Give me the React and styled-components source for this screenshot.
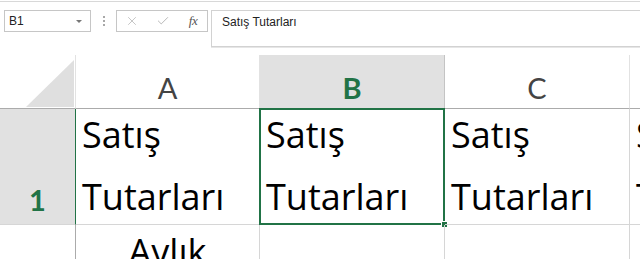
import React from "react"
import styled, { createGlobalStyle } from "styled-components"
import { X, Check } from "lucide-react"

const GREEN = "#217346"
const GRID = "#d6d6d6"

const GlobalStyle = createGlobalStyle`
  html, body { margin: 0; padding: 0; background: #fff; }
  body { overflow: hidden; }
`

// whole window, clipped to the screenshot size
const Window = styled.div`
  width: 640px;
  height: 259px;
  overflow: hidden;
  background: #fff;
  padding-top: 1px;
  box-sizing: border-box;
`

const TopRule = styled.div`
  height: 1px;
  background: #d8d8d8;
`

const FormulaBar = styled.div`
  display: flex;
  align-items: flex-start;
  margin-top: 8px;
  height: 37px;
  font-family: "Liberation Sans", Arial, sans-serif;
  font-size: 12px;
  color: #222;
`

const NameBox = styled.div`
  display: flex;
  align-items: center;
  justify-content: space-between;
  box-sizing: border-box;
  width: 87px;
  height: 22px;
  margin-left: 4px;
  padding: 0 8px 0 4px;
  border: 1px solid #c6c6c6;
`

const Caret = styled.span`
  width: 0;
  height: 0;
  border-left: 3px solid transparent;
  border-right: 3px solid transparent;
  border-top: 3px solid #777;
`

const Grip = styled.div`
  display: flex;
  flex-direction: column;
  align-items: center;
  gap: 2px;
  width: 25px;
  padding-top: 6px;

  span {
    width: 2px;
    height: 2px;
    background: #a8a8a8;
  }
`

const FxBox = styled.div`
  display: grid;
  grid-template-columns: 30px 32px 28px;
  align-items: center;
  justify-items: center;
  box-sizing: border-box;
  width: 92px;
  height: 22px;
  border: 1px solid #c6c6c6;
  color: #b4b4b4;
`

const Fx = styled.span`
  font-family: "Liberation Serif", "Times New Roman", serif;
  font-style: italic;
  font-size: 13px;
  color: #555;
  letter-spacing: -0.5px;
`

const FormulaInput = styled.div`
  flex: 1;
  box-sizing: border-box;
  height: 37px;
  margin-left: 3px;
  padding: 4px 10px;
  line-height: 14px;
  border: 1px solid #d2d2d2;
  border-right: none;
  box-shadow: 0 1px 0 #e6e6e6;
`

const Sheet = styled.div`
  display: grid;
  grid-template-columns: 76px 184px 185px 185px 185px;
  grid-template-rows: 54px 116px 60px;
  margin-top: 8px;
  font-family: Lato, "Open Sans", sans-serif;
`

const Corner = styled.div`
  display: flex;
  align-items: flex-end;
  justify-content: flex-end;
  box-sizing: border-box;
  padding: 0 1px 1px 0;
  border-right: 1px solid #e2e2e2;
  border-bottom: 1px solid #ababab;
`

const CornerMark = styled.div`
  width: 48px;
  height: 47px;
  background: #dfdfdf;
  clip-path: polygon(100% 0, 100% 100%, 0 100%);
`

const ColHeader = styled.div`
  display: flex;
  align-items: flex-end;
  justify-content: center;
  box-sizing: border-box;
  padding-bottom: 3px;
  font-size: 29px;
  background: ${p => (p.$selected ? "#e1e1e1" : "#fff")};
  color: ${p => (p.$selected ? GREEN : "#444")};
  font-weight: ${p => (p.$selected ? 700 : 400)};
  border-right: 1px solid ${p => (p.$selected ? "#c4c4c4" : "#e2e2e2")};
  border-bottom: 1px solid ${p => (p.$selected ? GREEN : "#ababab")};
`

const RowHeader = styled.div`
  display: flex;
  align-items: flex-end;
  justify-content: center;
  box-sizing: border-box;
  padding-bottom: 7px;
  font-size: 29px;
  background: ${p => (p.$selected ? "#e1e1e1" : "#fff")};
  color: ${p => (p.$selected ? GREEN : "#444")};
  font-weight: ${p => (p.$selected ? 700 : 400)};
  border-right: 1px solid ${p => (p.$selected ? GREEN : "#ababab")};
  border-bottom: 1px solid ${GRID};
`

const Cell = styled.div`
  position: relative;
  box-sizing: border-box;
  padding: ${p => (p.$center ? "7px 0 0" : "0 0 0 6px")};
  text-align: ${p => (p.$center ? "center" : "left")};
  font-family: "Open Sans", Lato, sans-serif;
  font-size: 36px;
  line-height: ${p => (p.$center ? "40px" : "62px")};
  color: #000;
  white-space: nowrap;
  border-right: 1px solid ${GRID};
  border-bottom: 1px solid ${GRID};
`

const CellText = styled.div`
  margin-top: -5px;
`

// active cell outline drawn over the grid lines
const Selection = styled.div`
  position: absolute;
  top: -1px;
  left: -1px;
  right: -1px;
  bottom: -1px;
  border: 2px solid ${GREEN};
  pointer-events: none;
`

const FillHandle = styled.div`
  position: absolute;
  right: -4px;
  bottom: -4px;
  width: 5px;
  height: 5px;
  background: ${GREEN};
  box-shadow: 0 0 0 1px #fff;
`

const columns = ["A", "B", "C", "D"]
const activeCol = "B"

export default function App() {
  return (
    <Window>
      <GlobalStyle />
      <TopRule />

      <FormulaBar>
        <NameBox>
          B1
          <Caret />
        </NameBox>
        <Grip>
          <span />
          <span />
          <span />
        </Grip>
        <FxBox>
          <X size={14} strokeWidth={1.3} />
          <Check size={14} strokeWidth={1.6} />
          <Fx>fx</Fx>
        </FxBox>
        <FormulaInput>Satış Tutarları</FormulaInput>
      </FormulaBar>

      <Sheet>
        <Corner>
          <CornerMark />
        </Corner>
        {columns.map(c => (
          <ColHeader key={c} $selected={c === activeCol}>{c}</ColHeader>
        ))}

        <RowHeader $selected>1</RowHeader>
        {columns.map(c => (
          <Cell key={c}>
            <CellText>
              Satış
              <br />
              Tutarları
            </CellText>
            {c === activeCol && (
              <Selection>
                <FillHandle />
              </Selection>
            )}
          </Cell>
        ))}

        <RowHeader />
        <Cell $center>Aylık</Cell>
        <Cell />
        <Cell />
        <Cell />
      </Sheet>
    </Window>
  )
}
